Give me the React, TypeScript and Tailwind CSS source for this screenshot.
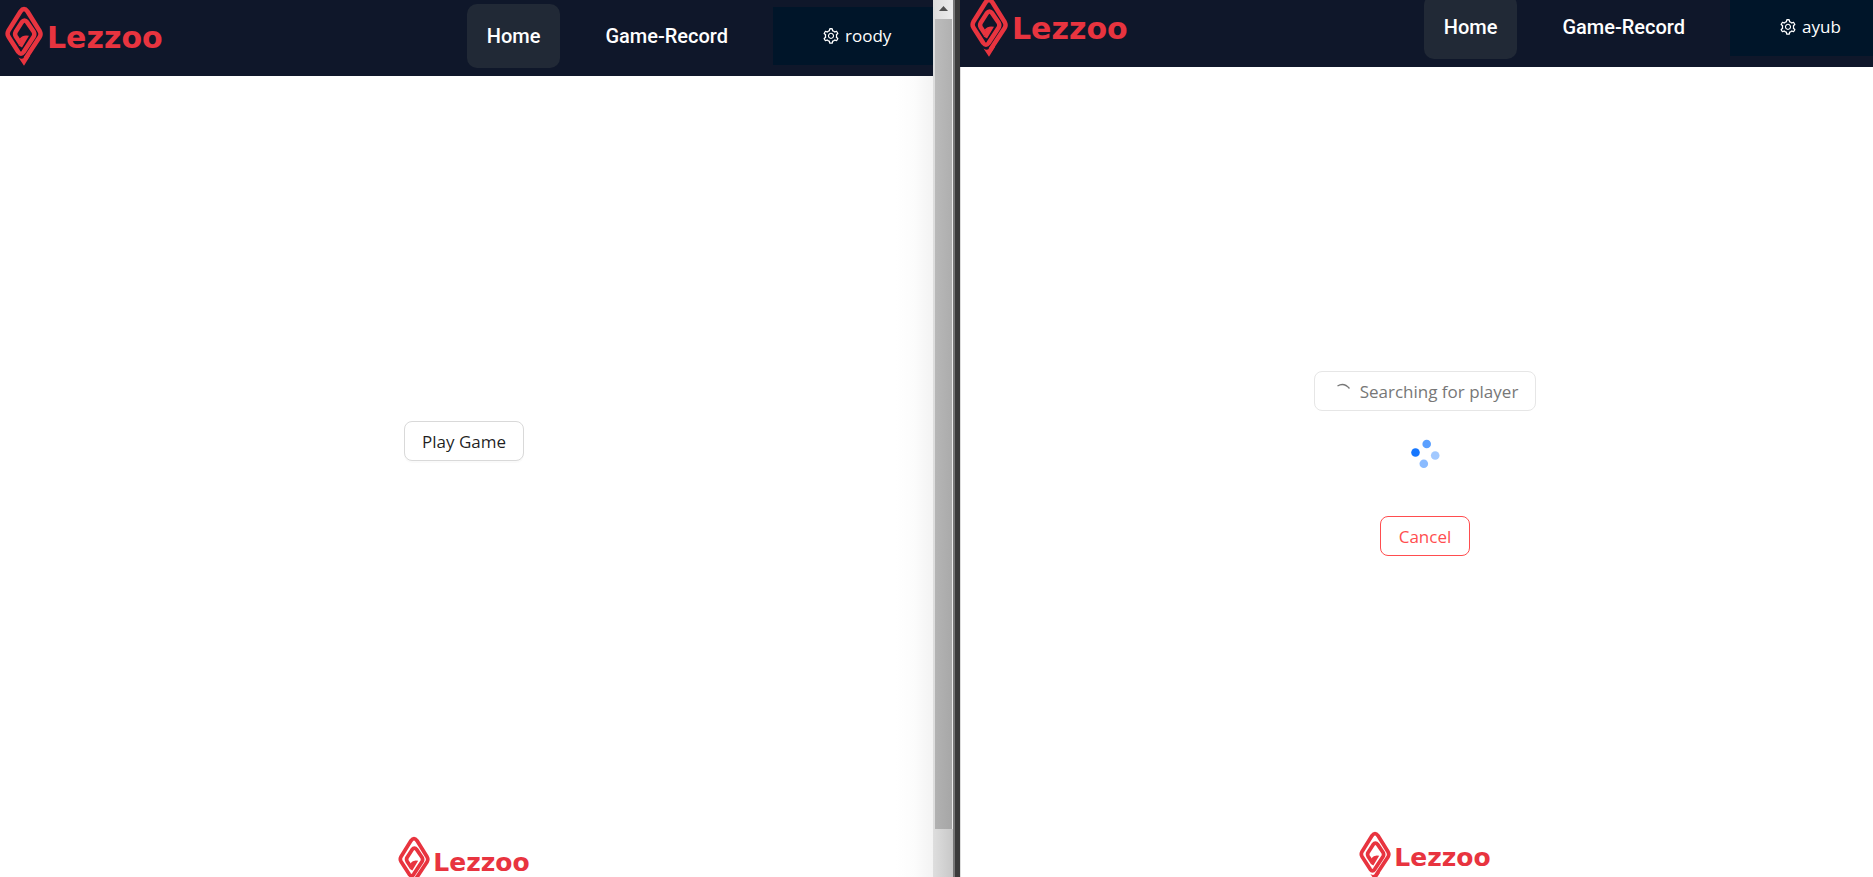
import { AiOutlineSetting } from "react-icons/ai";

function Mark({ className }: { className: string }) {
  return (
    <svg viewBox="0 0 38 60" className={className} fill="none" stroke="#e8343f" strokeWidth="4.8" strokeLinejoin="round" aria-hidden="true">
      <path d="M20.500 52.500 L34.800 30.800 Q36.300 28 34.800 25.300 L22.500 5.500 Q19 0.500 15.500 5.500 L3.400 24.800 Q1.800 27.700 3.400 30.500 L13.300 46 Q16 49.500 18.600 46 L28.700 30.500 Q30 28 28.700 25.800 L22.300 16.400 Q19.500 12.500 16.700 16.400 L10.700 25.800 Q9.500 28 10.700 30.200 L15.600 37.800" strokeWidth="4.500" />
      <path d="M13.600 39.400 L17 41.500 L24 29.800 Q18 28.300 14.800 32.600 L16.200 36 Z" fill="#e8343f" stroke="none" />
      <path d="M13.500 51.500 Q18 54.300 19.500 50.500 L25 50 L19 59.800 Z" fill="#e8343f" stroke="none" />
    </svg>
  );
}

function HeaderLogo() {
  return (
    <a href="#home" aria-label="Lezzoo" className="flex shrink-0 items-center gap-1">
      <Mark className="h-[60px] w-[38px]" />
      <span className="pt-1 font-['DejaVu_Sans',sans-serif] text-[30px] leading-10 font-bold text-[#e8343f]">Lezzoo</span>
    </a>
  );
}

function FooterLogo() {
  return (
    <div className="flex items-center gap-[3px]">
      <Mark className="h-[50px] w-[32px]" />
      <span className="pt-1 font-['DejaVu_Sans',sans-serif] text-[25px] leading-8 font-bold text-[#e8343f]">Lezzoo</span>
    </div>
  );
}

function HeaderRow({ user, menuClass }: { user: string; menuClass: string }) {
  return (
    <div className="flex h-[76px] w-full shrink-0 items-center pb-1">
      <HeaderLogo />
      <nav className="ml-auto flex items-center gap-[25px] font-[Roboto] text-[20px] leading-6 font-medium text-white">
        <a href="#home" className="flex h-16 items-center rounded-[10px] bg-[#212936] px-5">Home</a>
        <a href="#record" className="flex h-16 items-center px-5">Game-Record</a>
      </nav>
      <button type="button" className={`ml-[25px] flex h-[58px] shrink-0 items-center gap-[5px] bg-[#001529] pl-[49px] text-[17px] leading-6 text-white ${menuClass}`}>
        <AiOutlineSetting className="size-[18px]" aria-hidden="true" />
        {user}
      </button>
    </div>
  );
}

function Dots() {
  return (
    <svg viewBox="0 0 30 30" className="size-[30px]" fill="#1677ff" role="img" aria-label="Loading">
      <circle cx="5.500" cy="13.500" r="4.300" />
      <circle cx="16.700" cy="5" r="4.300" opacity="0.700" />
      <circle cx="25.200" cy="16.500" r="4.300" opacity="0.400" />
      <circle cx="13.800" cy="24.700" r="4.300" opacity="0.500" />
    </svg>
  );
}

function ScrollBar() {
  return (
    <div className="flex w-[20px] shrink-0 flex-col items-center bg-linear-to-r from-[#dcdcdc] to-[#ececec]" aria-hidden="true">
      <svg viewBox="0 0 20 19" className="h-[19px] w-[20px] shrink-0">
        <path d="M6 11 L10.500 6 L15 11 Z" fill="#505050" />
      </svg>
      <div className="h-[810px] w-[17px] bg-linear-to-br from-[#bcbcbc] to-[#a6a6a6]" />
      <div className="w-full flex-1 bg-linear-to-r from-[#dedede] to-[#c8c8c8]" />
    </div>
  );
}

export default function App() {
  return (
    <div className="flex h-screen overflow-hidden bg-white font-['Open_Sans',sans-serif]">
      <section className="flex min-w-0 flex-[933] flex-col overflow-hidden">
        <header className="h-[76px] shrink-0 bg-[#0f172a] pl-[5px]">
          <HeaderRow user="roody" menuClass="w-[160px]" />
        </header>
        <div className="flex flex-1 flex-col bg-linear-to-r from-white from-96% via-[#fcfcfc] via-98% to-[#f3f3f3] pr-[5px]">
          <main className="flex flex-1 items-center justify-center">
            <button type="button" className="h-10 rounded-lg border border-[#d9d9d9] bg-white px-[17px] pt-px text-[17px] leading-6 text-black/88 shadow-[0_2px_0_rgba(0,0,0,0.02)]">Play Game</button>
          </main>
          <footer className="flex h-[71px] items-start justify-center overflow-hidden pt-[30px]">
            <FooterLogo />
          </footer>
        </div>
      </section>
      <ScrollBar />
      <div className="w-[7px] shrink-0 border-l-2 border-[#777777] bg-[#3b3b3b]" />
      <section className="flex min-w-0 flex-[913] flex-col overflow-hidden">
        <header className="flex h-[67px] shrink-0 items-end overflow-hidden bg-[#0f172a] pl-[10px]">
          <HeaderRow user="ayub" menuClass="w-[143px]" />
        </header>
        <div className="flex flex-1 flex-col border-l border-[#dddddd] pl-4">
          <main className="flex flex-1 flex-col items-center justify-center pt-[59px]">
            <button type="button" disabled className="flex h-10 items-center gap-2 rounded-lg border border-[#e6e6e6] bg-white pt-px pr-[17px] pl-[19px] text-[17px] leading-6 text-[#777777]">
              <svg viewBox="0 0 18 18" className="size-[18px]" fill="none" stroke="#777777" strokeWidth="1.300" aria-hidden="true">
                <path d="M3.500 3 Q10 -1 15.500 5.500" />
              </svg>
              Searching for player
            </button>
            <div className="flex h-[105px] flex-col pt-[28px]">
              <Dots />
            </div>
            <button type="button" className="h-10 rounded-lg border border-[#ff4d4f] bg-white px-[18px] pt-px text-[17px] leading-6 text-[#ff4d4f]">Cancel</button>
          </main>
          <footer className="flex h-[76px] items-start justify-center overflow-hidden pt-[30px]">
            <FooterLogo />
          </footer>
        </div>
      </section>
    </div>
  );
}
